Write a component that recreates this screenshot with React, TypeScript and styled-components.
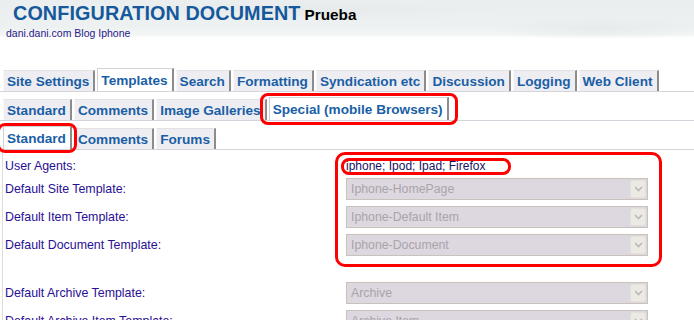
import React from 'react'
import styled, { createGlobalStyle } from 'styled-components'

const GlobalStyle = createGlobalStyle`
  body {
    margin: 0;
    background: #ffffff;
    font-family: 'Liberation Sans', Arial, sans-serif;
  }
`

const mainTabs = ['Site Settings', 'Templates', 'Search', 'Formatting', 'Syndication etc', 'Discussion', 'Logging', 'Web Client']
const templateTabs = ['Standard', 'Comments', 'Image Galleries', 'Special (mobile Browsers)']
const specialTabs = ['Standard', 'Comments', 'Forums']

interface IField {
  label: string
  value: string
  select?: boolean
  spaced?: boolean
}

const fields: IField[] = [
  { label: 'User Agents:', value: 'iphone; Ipod; Ipad; Firefox' },
  { label: 'Default Site Template:', value: 'Iphone-HomePage', select: true },
  { label: 'Default Item Template:', value: 'Iphone-Default Item', select: true },
  { label: 'Default Document Template:', value: 'Iphone-Document', select: true },
  { label: 'Default Archive Template:', value: 'Archive', select: true, spaced: true },
  { label: 'Default Archive Item Template:', value: 'Archive Item', select: true },
]

function TabStrip({ tabs, active, first }: { tabs: string[], active: number, first?: boolean }) {
  return (
    <TabRow $first={first}>
      {tabs.map((t, i) => (
        <Tab key={t} $active={i === active}>{t}</Tab>
      ))}
    </TabRow>
  )
}

function Chevron() {
  return (
    <svg width='9' height='6' viewBox='0 0 9 6'>
      <path d='M1 1 L4.5 4.5 L8 1' fill='none' stroke='#bdb9b2' strokeWidth='1.6' />
    </svg>
  )
}

function App() {
  return (
    <Page>
      <GlobalStyle />
      <Header>
        <TitleLine>
          <Title>CONFIGURATION DOCUMENT</Title>
          <SubTitle>Prueba</SubTitle>
        </TitleLine>
        <SiteName>dani.dani.com Blog Iphone</SiteName>
      </Header>

      <TabStrip tabs={mainTabs} active={1} first />
      <TabStrip tabs={templateTabs} active={3} />
      <TabStrip tabs={specialTabs} active={0} />

      <Content>
        {fields.map(f => (
          <FieldRow key={f.label} $spaced={f.spaced} $tall={f.select}>
            <Label>{f.label}</Label>
            {f.select ? (
              <Select>
                <span>{f.value}</span>
                <ArrowButton><Chevron /></ArrowButton>
              </Select>
            ) : (
              <Value>{f.value}</Value>
            )}
          </FieldRow>
        ))}
      </Content>

      <Marker $x={260} $y={93} $w={198} $h={32} />
      <Marker $x={-3} $y={123} $w={80} $h={30} />
      <Marker $x={335} $y={152} $w={327} $h={115} $r={10} />
      <Marker $x={341} $y={158} $w={170} $h={17} $r={8} />
    </Page>
  )
}

export default App

const Page = styled.div`
  height: 320px;
  overflow: hidden;
  position: relative;
  width: 694px;
`

const Header = styled.div`
  background:
    radial-gradient(ellipse 120px 12px at 600px 28px, #e7ebeb 0%, rgba(231, 235, 235, 0) 100%),
    radial-gradient(ellipse 200px 10px at 300px 10px, #e6eaea 0%, rgba(230, 234, 234, 0) 100%),
    linear-gradient(to bottom, #eaeeee 0%, #eef1f1 70%, #f4f6f6 92%, #ffffff 100%);
  box-sizing: border-box;
  height: 38px;
  padding: 2px 0 0 6px;
`

const TitleLine = styled.div`
  align-items: baseline;
  display: flex;
  gap: 4px;
  padding-left: 7px;
`

const Title = styled.span`
  color: #15599c;
  font-size: 19.8px;
  font-weight: bold;
  letter-spacing: 0.1px;
`

const SubTitle = styled.span`
  color: #000000;
  font-size: 15.3px;
  font-weight: bold;
`

const SiteName = styled.div`
  color: #2a1a8c;
  font-size: 10.5px;
  margin-top: 2px;
`

const TabRow = styled.div<{ $first?: boolean }>`
  align-items: flex-end;
  border-bottom: 1px solid #d4d4dc;
  display: flex;
  gap: 2px;
  height: 23px;
  margin-top: ${p => (p.$first ? '30px' : '5px')};
  padding-left: 3px;
`

const Tab = styled.div<{ $active?: boolean }>`
  align-items: center;
  background: ${p => (p.$active ? '#ffffff' : '#eeedf1')};
  border-left: 1px solid ${p => (p.$active ? '#cfcfd4' : '#f8f8f8')};
  border-right: 2px solid #8c8c8c;
  border-top: 1px solid ${p => (p.$active ? '#d4d4d8' : '#e2e2e6')};
  box-sizing: border-box;
  color: #1a5fa6;
  display: flex;
  font-size: 13.6px;
  font-weight: bold;
  height: ${p => (p.$active ? '23px' : '21px')};
  padding: 0 4px 0 3px;
  white-space: nowrap;
`

const Content = styled.div`
  border-left: 1px solid #dcdcdc;
  margin-left: 2px;
  padding: 8px 0 0 2px;
`

const FieldRow = styled.div<{ $spaced?: boolean, $tall?: boolean }>`
  align-items: center;
  display: grid;
  grid-template-columns: 341px 302px;
  height: ${p => (p.$tall ? '22px' : '16px')};
  margin-bottom: ${p => (p.$tall ? '6px' : '4px')};
  margin-top: ${p => (p.$spaced ? '26px' : '0')};
`

const Label = styled.div`
  color: #2a0f96;
  font-size: 12.4px;
  white-space: nowrap;
`

const Value = styled.div`
  color: #1a1060;
  font-size: 12px;
  white-space: nowrap;
`

const Select = styled.div`
  align-items: center;
  background: #ddd7df;
  border: 1px solid #c8c2ba;
  box-sizing: border-box;
  color: #aaa3ab;
  display: flex;
  font-size: 12.3px;
  height: 22px;
  justify-content: space-between;
  padding: 0 1px 0 4px;
`

const ArrowButton = styled.div`
  align-items: center;
  background: #ebeae5;
  border: 1px solid #e2e0da;
  border-radius: 2px;
  box-sizing: border-box;
  display: flex;
  height: 18px;
  justify-content: center;
  width: 16px;
`

const Marker = styled.div<{ $x: number, $y: number, $w: number, $h: number, $r?: number }>`
  border: 3px solid #ff0000;
  border-radius: ${p => p.$r ?? 8}px;
  box-sizing: border-box;
  height: ${p => p.$h}px;
  left: ${p => p.$x}px;
  pointer-events: none;
  position: absolute;
  top: ${p => p.$y}px;
  width: ${p => p.$w}px;
`
